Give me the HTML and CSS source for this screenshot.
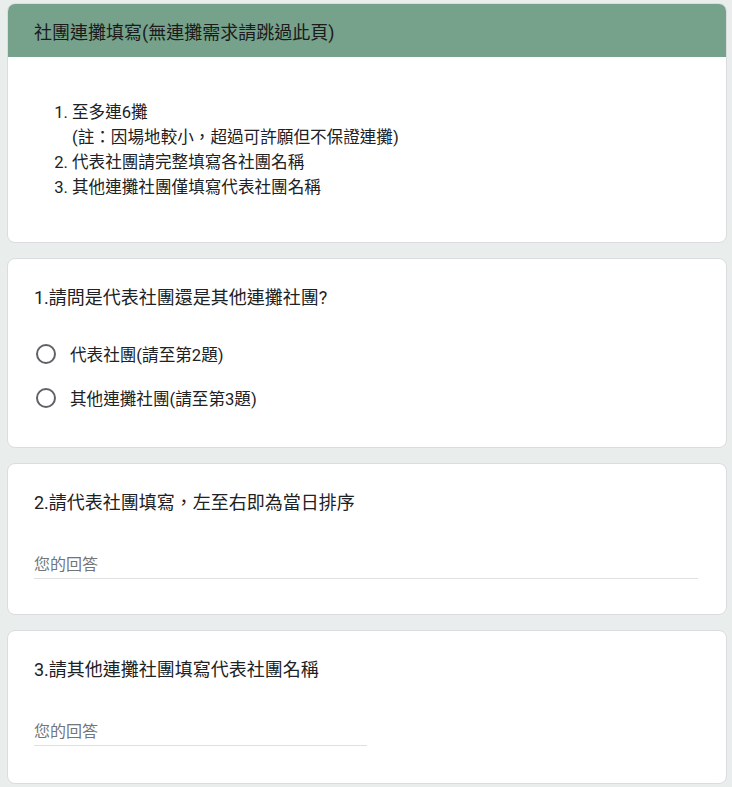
FILE: index.html
```html
<!DOCTYPE html>
<html lang="zh-Hant">
<head>
<meta charset="utf-8">
<title>社團連攤填寫</title>
<link rel="stylesheet" href="styles.css">
</head>
<body>
<div class="page">
  <section class="card">
    <div class="card-header">社團連攤填寫(無連攤需求請跳過此頁)</div>
    <div class="card-desc">
      <ol class="rules">
        <li>至多連6攤<br>(註：因場地較小，超過可許願但不保證連攤)</li>
        <li>代表社團請完整填寫各社團名稱</li>
        <li>其他連攤社團僅填寫代表社團名稱</li>
      </ol>
    </div>
  </section>

  <section class="card question">
    <div class="q-title">1.請問是代表社團還是其他連攤社團?</div>
    <div class="options">
      <label class="option"><span class="radio"></span><span class="opt-text">代表社團(請至第2題)</span></label>
      <label class="option"><span class="radio"></span><span class="opt-text">其他連攤社團(請至第3題)</span></label>
    </div>
  </section>

  <section class="card question">
    <div class="q-title">2.請代表社團填寫，左至右即為當日排序</div>
    <div class="answer answer-full"><span class="placeholder">您的回答</span></div>
  </section>

  <section class="card question last">
    <div class="q-title">3.請其他連攤社團填寫代表社團名稱</div>
    <div class="answer answer-half"><span class="placeholder">您的回答</span></div>
  </section>
</div>
</body>
</html>
```

FILE: styles.css
```css
* { box-sizing: border-box; }

html, body {
  margin: 0;
  padding: 0;
  background: #e9eeec;
}

body {
  font-family: Roboto, "Noto Sans CJK TC", "Noto Sans", sans-serif;
  color: #202124;
}

.page {
  width: 720px;
  margin-left: 7px;
  padding-top: 3px;
  display: flex;
  flex-direction: column;
  gap: 15px;
}

.card {
  background: #fff;
  border: 1px solid #dadce0;
  border-radius: 8px;
  overflow: hidden;
}

.card-header {
  background: #76a18b;
  height: 53px;
  display: flex;
  align-items: center;
  padding-left: 26px;
  font-size: 18px;
  color: #1b1b1b;
}

.card-desc {
  padding: 43px 26px 42px 26px;
}

.rules {
  margin: 0;
  padding-left: 38px;
  font-size: 16.6px;
  line-height: 25px;
}

.question {
  padding: 27px 28px 27px 26px;
}

.q-title {
  font-size: 18px;
  line-height: 24px;
}

.options {
  margin-top: 22px;
  display: flex;
  flex-direction: column;
}

.option {
  height: 44px;
  display: flex;
  align-items: center;
  gap: 14px;
  padding-left: 2px;
}

.radio {
  width: 20px;
  height: 20px;
  border: 2px solid #5f6368;
  border-radius: 50%;
  flex: none;
}

.opt-text {
  font-size: 16.6px;
}

.answer {
  margin-top: 33px;
  height: 31px;
  border-bottom: 1px solid #e0e0e0;
  display: flex;
  align-items: center;
  margin-bottom: 8px;
}

.last .answer { margin-bottom: 10px; }

.answer-full { width: 664px; }
.answer-half { width: 333px; }

.placeholder {
  font-size: 16px;
  color: #70757a;
}
```
